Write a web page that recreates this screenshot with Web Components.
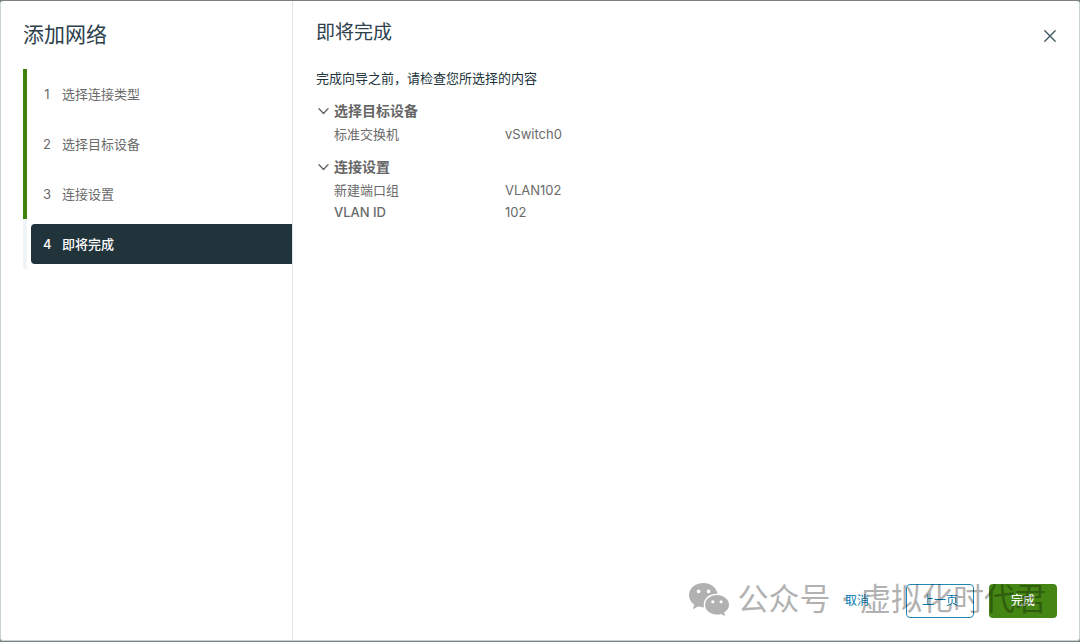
<!DOCTYPE html>
<html lang="zh-CN">
<head>
<meta charset="utf-8">
<meta name="viewport" content="width=device-width, initial-scale=1">
<title>添加网络</title>
<style>
  body {
    margin: 0;
    background: #7b8183;
    font: 13px/22px Inter, "Noto Sans CJK SC", sans-serif;
    color: #6a6a6a;
  }
</style>
</head>
<body>
<network-wizard heading="添加网络">
  <wizard-step slot="steps" number="1" state="done">选择连接类型</wizard-step>
  <wizard-step slot="steps" number="2" state="done">选择目标设备</wizard-step>
  <wizard-step slot="steps" number="3" state="done">连接设置</wizard-step>
  <wizard-step slot="steps" number="4" state="current">即将完成</wizard-step>

  <wizard-page heading="即将完成" intro="完成向导之前，请检查您所选择的内容">
    <review-section heading="选择目标设备">
      <review-row label="标准交换机">vSwitch0</review-row>
    </review-section>
    <review-section heading="连接设置">
      <review-row label="新建端口组">VLAN102</review-row>
      <review-row label="VLAN ID" strong>102</review-row>
    </review-section>
  </wizard-page>

  <wizard-button slot="actions" kind="link">取消</wizard-button>
  <wizard-button slot="actions" kind="outline">上一页</wizard-button>
  <wizard-button slot="actions" kind="primary">完成</wizard-button>
</network-wizard>
<account-watermark>公众号 · 虚拟化时代君</account-watermark>

<script>
class NetworkWizard extends HTMLElement {
  constructor() {
    super();
    this.attachShadow({ mode: "open" });
  }

  connectedCallback() {
    this.shadowRoot.innerHTML = `
      <style>
        :host {
          display: grid;
          grid-template-columns: 292px 1fr;
          box-sizing: border-box;
          min-height: calc(100vh - 2px);
          margin: 1px 0;
          border: 1px solid #c9d3d5;
          border-top: 0;
          border-radius: 3px;
          background: #fff;
        }
        nav {
          padding: 20px 0 0 22px;
          border-right: 1px solid #dde3e6;
        }
        h1 {
          margin: 0 0 20px;
          font-size: 21px;
          line-height: 28px;
          font-weight: 400;
          color: #2d404b;
        }
        main {
          display: flex;
          flex-direction: column;
          padding: 20px 22px 22px 23px;
        }
        footer {
          display: flex;
          justify-content: flex-end;
          gap: 15px;
          margin-top: auto;
        }
      </style>
      <nav>
        <h1>${this.getAttribute("heading")}</h1>
        <slot name="steps"></slot>
      </nav>
      <main>
        <slot></slot>
        <footer><slot name="actions"></slot></footer>
      </main>
    `;
  }
}

class WizardStep extends HTMLElement {
  constructor() {
    super();
    this.attachShadow({ mode: "open" });
  }

  connectedCallback() {
    const current = this.getAttribute("state") === "current";
    this.shadowRoot.innerHTML = `
      <style>
        :host {
          display: block;
          padding: 5px 0 5px 4px;
          border-left: 4px solid #eff5f7;
        }
        :host([state="done"]) {
          border-color: #42810e;
        }
        button {
          display: flex;
          align-items: center;
          gap: 11px;
          width: 100%;
          height: 40px;
          padding: 0 12px;
          border: 0;
          border-radius: 4px 0 0 4px;
          background: none;
          font: inherit;
          color: inherit;
          cursor: pointer;
        }
        :host([state="current"]) button {
          background: #21333b;
          color: #fff;
          font-weight: 500;
        }
        .number {
          width: 8px;
          text-align: center;
        }
      </style>
      <button type="button" ${current ? 'aria-current="step"' : ""}>
        <span class="number">${this.getAttribute("number")}</span>
        <span><slot></slot></span>
      </button>
    `;
  }
}

class WizardPage extends HTMLElement {
  constructor() {
    super();
    this.attachShadow({ mode: "open" });
  }

  connectedCallback() {
    this.shadowRoot.innerHTML = `
      <style>
        :host {
          display: block;
        }
        header {
          display: flex;
          justify-content: space-between;
        }
        h2 {
          margin: 0;
          font-size: 19px;
          line-height: 24px;
          font-weight: 400;
          color: #2d404b;
        }
        .close {
          display: flex;
          height: 28px;
          padding: 8px 0 8px 8px;
          border: 0;
          background: none;
          color: #435a66;
          cursor: pointer;
        }
        p {
          margin: 18px 0 11px;
          color: #21333b;
        }
      </style>
      <header>
        <h2>${this.getAttribute("heading")}</h2>
        <button class="close" type="button" aria-label="关闭">
          <svg width="14" height="14" viewBox="0 0 14 14" fill="none" stroke="currentColor" stroke-width="1.4" stroke-linecap="round">
            <path d="M1.8 1.8 12.2 12.2M12.2 1.8 1.8 12.2"/>
          </svg>
        </button>
      </header>
      <p>${this.getAttribute("intro")}</p>
      <slot></slot>
    `;
  }
}

class ReviewSection extends HTMLElement {
  constructor() {
    super();
    this.attachShadow({ mode: "open" });
  }

  connectedCallback() {
    this.shadowRoot.innerHTML = `
      <style>
        :host {
          display: block;
          margin-bottom: 11px;
        }
        h3 {
          margin: 0 0 1px;
          font-size: 14px;
          line-height: 22px;
        }
        button {
          display: flex;
          align-items: center;
          gap: 5px;
          padding: 0 0 0 2px;
          border: 0;
          background: none;
          font: inherit;
          color: #666;
          cursor: pointer;
        }
        .rows {
          padding-left: 18px;
        }
      </style>
      <h3>
        <button type="button" aria-expanded="true">
          <svg width="11" height="8" viewBox="0 0 11 8" fill="none" stroke="currentColor" stroke-width="1.4" stroke-linecap="round" stroke-linejoin="round">
            <path d="M1 1.8 5.5 6.4 10 1.8"/>
          </svg>
          ${this.getAttribute("heading")}
        </button>
      </h3>
      <div class="rows"><slot></slot></div>
    `;
    this.shadowRoot
      .querySelector("button")
      .addEventListener("click", this.toggle.bind(this));
  }

  toggle() {
    const rows = this.shadowRoot.querySelector(".rows");
    rows.hidden = !rows.hidden;
    this.shadowRoot
      .querySelector("button")
      .setAttribute("aria-expanded", String(!rows.hidden));
  }
}

class ReviewRow extends HTMLElement {
  constructor() {
    super();
    this.attachShadow({ mode: "open" });
  }

  connectedCallback() {
    this.shadowRoot.innerHTML = `
      <style>
        :host {
          display: grid;
          grid-template-columns: 171px 1fr;
        }
        :host([strong]) .label {
          font-weight: 500;
        }
      </style>
      <span class="label">${this.getAttribute("label")}</span>
      <span><slot></slot></span>
    `;
  }
}

class WizardButton extends HTMLElement {
  constructor() {
    super();
    this.attachShadow({ mode: "open" });
  }

  connectedCallback() {
    this.shadowRoot.innerHTML = `
      <style>
        :host {
          display: block;
        }
        button {
          min-width: 68px;
          height: 34px;
          padding: 0 12px;
          border: 1px solid transparent;
          border-radius: 4px;
          background: none;
          font: inherit;
          font-size: 12px;
          color: #0079ad;
          cursor: pointer;
        }
        :host([kind="outline"]) button {
          border-color: #2387b6;
        }
        :host([kind="primary"]) button {
          background: #448513;
          color: #fff;
          font-weight: 500;
        }
      </style>
      <button type="button"><slot></slot></button>
    `;
  }
}

class AccountWatermark extends HTMLElement {
  constructor() {
    super();
    this.attachShadow({ mode: "open" });
  }

  connectedCallback() {
    this.shadowRoot.innerHTML = `
      <style>
        /* Lies over the footer without catching its clicks */
        :host {
          position: absolute;
          right: 34px;
          bottom: 22px;
          display: flex;
          align-items: center;
          gap: 7px;
          font-family: "DejaVu Sans", "Noto Sans CJK SC", sans-serif;
          font-size: 31px;
          line-height: 42px;
          white-space: nowrap;
          color: #000;
          opacity: 0.3;
          pointer-events: none;
        }
      </style>
      <svg width="42" height="34" viewBox="0 0 42 34" fill="currentColor" aria-hidden="true">
        <path fill-rule="evenodd" d="M15.500 1C7.200 1 1 6.400 1 13.300c0 3.900 2 7.200 5.200 9.500L4.900 27.200l5-2.700c1.900.6 3.700.8 6.200.8-.3-1-.4-1.800-.4-2.700 0-6.200 5.700-10.900 12.500-10.900h1.500C28.300 5.500 22.600 1 15.500 1ZM10.600 7.400a1.900 1.900 0 1 1 0 3.800 1.900 1.900 0 0 1 0-3.800Zm10 0a1.900 1.900 0 1 1 0 3.800 1.900 1.900 0 0 1 0-3.800Z"/>
        <path fill-rule="evenodd" d="M29 13c-6.700 0-11.900 4.400-11.900 9.900S22.300 32.500 29 32.500c1.500 0 2.800-.2 4-.6l4.200 2.100-1.100-3.700c2.900-1.800 4.900-4.300 4.900-7.400C41 17.400 35.700 13 29 13Zm-4.200 5.200a1.600 1.600 0 1 1 0 3.200 1.600 1.600 0 0 1 0-3.200Zm8.300 0a1.600 1.600 0 1 1 0 3.200 1.600 1.600 0 0 1 0-3.200Z"/>
      </svg>
      <span><slot></slot></span>
    `;
  }
}

customElements.define("network-wizard", NetworkWizard);
customElements.define("wizard-step", WizardStep);
customElements.define("wizard-page", WizardPage);
customElements.define("review-section", ReviewSection);
customElements.define("review-row", ReviewRow);
customElements.define("wizard-button", WizardButton);
customElements.define("account-watermark", AccountWatermark);
</script>
</body>
</html>
